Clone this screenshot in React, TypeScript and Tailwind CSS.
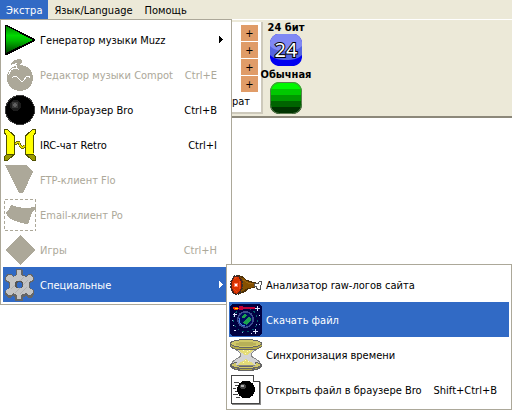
import { ReactNode } from "react";
import clsx from "clsx";

type Item = {
  label: string;
  icon: ReactNode;
  shortcut?: string;
  disabled?: boolean;
  active?: boolean;
  submenu?: boolean;
};

function Icon({ children }: { children: ReactNode }) {
  return (
    <svg
      viewBox="0 0 32 32"
      className="h-8 w-8 shrink-0"
      shapeRendering="crispEdges"
      aria-hidden="true"
    >
      {children}
    </svg>
  );
}

const PlayIcon = (
  <Icon>
    <defs>
      <linearGradient id="play" x1="0" y1="0" x2="0" y2="1">
        <stop offset="0" stopColor="#008000" />
        <stop offset="0.35" stopColor="#00d800" />
        <stop offset="0.55" stopColor="#00b800" />
        <stop offset="1" stopColor="#004000" />
      </linearGradient>
    </defs>
    <path d="M1 1h2l28 14v2L3 31H1z" fill="#000" />
    <path d="M2 2l27 14L2 29z" fill="url(#play)" />
  </Icon>
);

const CompotIcon = (
  <Icon>
    <circle cx="16" cy="19" r="13" fill="#aca899" />
    <path d="M7 6c0-3 4-6 9-6 3 0 3 4 1 5-2 1-2 3-1 5h-4c-1-3 0-4 1-6-2 0-4 1-6 2z" fill="#aca899" />
    <path d="M12.500 6c-1 3 0 4 2 4M4.500 16c1-4 4-7 7-7" fill="none" stroke="#fff" />
    <path d="M8 19l2-2h2l5 5h2l4-5h2l1 2" fill="none" stroke="#fff" />
  </Icon>
);

const BallIcon = (
  <Icon>
    <circle cx="16" cy="16" r="15" fill="#3c3c3c" />
    <circle cx="16" cy="16" r="14" fill="#000" />
    <circle cx="11.500" cy="11.500" r="5.500" fill="#1c1c1c" />
    <circle cx="11" cy="11" r="3.500" fill="#3a3a3a" />
    <circle cx="11" cy="11" r="1.800" fill="#606060" />
  </Icon>
);

const RetroIcon = (
  <Icon>
    <path d="M0 0h3l8 6v20l-8 6H0v-4l2-3V7L0 4z" fill="#505000" />
    <path d="M32 0h-3l-8 6v20l8 6h3v-4l-2-3V7l2-3z" fill="#505000" />
    <path d="M1 1h2l7 6v18H2l1-1V7L1 3zM31 1h-2l-7 6v18h8l-1-1V7l2-4z" fill="#ff0" />
    <path d="M2 26h7l-6 5H1v-3zM30 26h-7l6 5h2v-3z" fill="#989800" />
    <path d="M11 14.500h1l1-1h2l1 3 2 2h1l2-2" fill="none" stroke="#706c00" strokeWidth="2.400" />
    <path d="M11 14.500h1l1-1h2l1 3 2 2h1l2-2" fill="none" stroke="#e8e000" />
  </Icon>
);

const FloIcon = (
  <Icon>
    <path d="M1 1h21l7 7-10 21h-4z" fill="#aca899" />
  </Icon>
);

const PoIcon = (
  <Icon>
    <rect x="0.500" y="0.500" width="31" height="31" fill="none" stroke="#aca899" strokeDasharray="3 2" />
    <path d="M7 6l6 2 8 1 11-1v2h-1l-3 4-4 11h-2l-11-3-6-3-3-5 3-4z" fill="#aca899" />
  </Icon>
);

const DiamondIcon = (
  <Icon>
    <path d="M16 1l15 15-15 15L1 16z" fill="#aca899" />
  </Icon>
);

const GearIcon = (
  <Icon>
    <path
      d="M12 0h6l1 2v4l3 1 2-2h4l2 4v3l-4 2v5l4 2v4l-2 4h-4l-2-2-3 1v4l-2 2h-4l-2-2v-4l-3-1-2 2H4l-3-4v-3l4-3v-5l-4-2V9l2-4h4l2 2 3-1z"
      fill="#666"
    />
    <path
      d="M13 1h4v5l5 2 2-2h3l2 3v2l-4 2v6l4 2v2l-2 3h-3l-2-2-5 2v4h-4v-4l-4-2-2 2H4l-2-3v-2l4-2v-6l-4-2V9l2-3h3l2 2 4-2z"
      fill="#c4c4c4"
    />
    <path d="M7 20L20 8M11 24l13-13M16 25l7-7" stroke="#b0b0b0" fill="none" />
    <circle cx="15" cy="15.500" r="4" fill="#555" />
    <circle cx="15.500" cy="16" r="3" fill="#316ac5" />
  </Icon>
);

const MeatIcon = (
  <Icon>
    <path d="M7 6l5 1 5 4 7 2 3 1v4l-8 2-4 3-7 3z" fill="#4c3008" />
    <path d="M9 8l4 1 4 3 8 3v3l-7 1-5 3-4 2z" fill="#855000" />
    <path d="M13 11l5 3h5" stroke="#9c6410" fill="none" />
    <path d="M24 14h4l1-2h3v4h-1v5h-4l-1-3h-2z" fill="#555" />
    <path d="M25 15h4v-2h2v2l-1 2v3h-2l-1-3h-2z" fill="#fff" />
    <ellipse cx="6.500" cy="16" rx="6" ry="9.500" fill="#552014" stroke="#333" strokeDasharray="2 1" />
    <ellipse cx="6.500" cy="16" rx="4.500" ry="8.500" fill="#d83400" />
    <path d="M4 10l3-2M9 12v8M4 20l3 3" stroke="#e84818" />
    <ellipse cx="6" cy="16" rx="2" ry="2.500" fill="#ff8060" />
    <circle cx="6" cy="16" r="1.200" fill="#fff" />
  </Icon>
);

const SpaceIcon = (
  <Icon>
    <rect width="32" height="32" rx="4" fill="#000040" />
    <circle cx="15.500" cy="16" r="12" fill="none" stroke="#00606c" strokeDasharray="2 3" />
    <circle cx="15.500" cy="15.500" r="8.500" fill="#3c4c90" />
    <circle cx="15.500" cy="15.500" r="7" fill="#000c60" />
    <path d="M12 12l2-2 3 1-2 3h-3zM13 18l5-5 3 1v3l-3 2-1 2-3-1z" fill="#1ca050" />
    <path d="M9 14a7 7 0 006 8" stroke="#4080e0" fill="none" />
    <path d="M9 2h3l1 1h12v2H13l-1 1H9z" fill="#c00038" />
    <path d="M3 3h4l2 1-2 2H5L3 5z" fill="#f03000" />
    <path d="M5 4h3v1H5z" fill="#ffe000" />
    <path d="M27.500 2v5M25 4.500h5M25.500 25v5M23 27.500h5M4.500 9v4M2.500 10.500h4M4 26.500h2M3 21.500h1M29 11.500h1M21 29.500h1" stroke="#dce4ff" />
    <path d="M2 16.500h1M26 20.500h1M12 28.500h1M29 20.500h1" stroke="#90a0e0" />
  </Icon>
);

const HourglassIcon = (
  <Icon>
    <path d="M4 8c2 4 7 5 7 8S2 20 1 26h30c-1-6-10-7-10-10s5-4 7-8z" fill="#d4d4d4" stroke="#888" />
    <path d="M7 9c2 4 6 5 7 7h4c1-2 5-3 7-7z" fill="#e4dc78" />
    <path d="M8 26c2-4 6-3 8-7 2 4 6 3 8 7z" fill="#e4dc78" />
    <path d="M15 14h1v1h-1zM17 12h1v1h-1zM13 11h1v1h-1zM19 11h1v1h-1zM15 21h1v1h-1zM18 22h1v1h-1zM13 23h1v1h-1z" fill="#fffcc0" />
    <path d="M0 4v3c2 3 8 4 16 4s14-1 16-4V4z" fill="#b4ac48" stroke="#666" />
    <ellipse cx="16" cy="4.500" rx="15.500" ry="4" fill="#d0c868" stroke="#666" />
    <ellipse cx="16" cy="5" rx="11" ry="2" fill="#b8b058" />
    <path d="M0 26c1-2 4-3 7-3l-1 3c3 2 17 2 20 0l-1-3c3 0 6 1 7 3v2c-2 3-8 4-16 4S2 31 0 28z" fill="#666" />
    <path d="M1 26c1-1 3-2 5-2v2c3 3 17 3 20 0v-2c2 0 4 1 5 2-2 2-8 3-15 3S3 28 1 26z" fill="#d0c868" />
    <path d="M2 28c3 2 8 2 14 2s11 0 14-2c-3 2-8 3-14 3S5 30 2 28z" fill="#b4ac48" />
  </Icon>
);

const BroFileIcon = (
  <Icon>
    <path d="M1.500 1.500h22l6 6v22h-28z" fill="#fff" stroke="#444" />
    <path d="M30.500 8v22.500H2" fill="none" stroke="#888" />
    <path d="M23.500 1.500v6h6" fill="#fff" stroke="#444" />
    <path d="M4 8.500h5M5 11.500h3M3 14.500h3M5 17.500h2M3 20.500h5M6 23.500h4" stroke="#444" />
    <circle cx="16" cy="15.500" r="9" fill="#000" />
    <circle cx="13" cy="12.500" r="2.800" fill="#404040" />
    <circle cx="12.500" cy="12" r="1.300" fill="#b0b0b0" />
  </Icon>
);

const extraItems: Item[] = [
  { label: "Генератор музыки Muzz", icon: PlayIcon, submenu: true },
  { label: "Редактор музыки Compot", icon: CompotIcon, shortcut: "Ctrl+E", disabled: true },
  { label: "Мини-браузер Bro", icon: BallIcon, shortcut: "Ctrl+B" },
  { label: "IRC-чат Retro", icon: RetroIcon, shortcut: "Ctrl+I" },
  { label: "FTP-клиент Flo", icon: FloIcon, disabled: true },
  { label: "Email-клиент Po", icon: PoIcon, disabled: true },
  { label: "Игры", icon: DiamondIcon, shortcut: "Ctrl+H", disabled: true },
  { label: "Специальные", icon: GearIcon, submenu: true, active: true },
];

const specialItems: Item[] = [
  { label: "Анализатор raw-логов сайта", icon: MeatIcon },
  { label: "Скачать файл", icon: SpaceIcon, active: true },
  { label: "Синхронизация времени", icon: HourglassIcon },
  { label: "Открыть файл в браузере Bro", icon: BroFileIcon, shortcut: "Shift+Ctrl+B" },
];

function MenuItem({ item }: { item: Item }) {
  return (
    <button
      disabled={item.disabled}
      className={clsx(
        "flex h-[35px] w-full items-center gap-1 pl-px text-left whitespace-nowrap",
        item.disabled && "text-[#aca899]",
        item.active && "bg-[#316ac5] text-white",
        item.submenu ? "pr-1.5" : "pr-3"
      )}
    >
      {item.icon}
      <span className="flex-1 pt-0.5">{item.label}</span>
      {item.shortcut && <span className="pt-0.5">{item.shortcut}</span>}
      {item.submenu && (
        <svg viewBox="0 0 4 7" className="h-[7px] w-1" fill="currentColor" shapeRendering="crispEdges">
          <path d="M0 0l4 3.500L0 7z" />
        </svg>
      )}
    </button>
  );
}

function Menu({ items, className }: { items: Item[]; className: string }) {
  return (
    <div className={clsx("absolute border border-[#aca899] bg-white p-0.5", className)}>
      {items.map((item) => (
        <MenuItem key={item.label} item={item} />
      ))}
    </div>
  );
}

export default function App() {
  return (
    <div className="relative min-h-screen overflow-hidden bg-white font-['DejaVu_Sans_Condensed','Noto_Sans',sans-serif] text-[11px] leading-[13px] text-black">
      <nav className="flex h-[19px] bg-[#ece9d8]">
        <button className="bg-[#316ac5] px-1.5 pt-0.5 text-white">Экстра</button>
        <button className="px-1.5 pt-0.5">Язык/Language</button>
        <button className="px-1.5 pt-0.5">Помощь</button>
      </nav>

      <div className="flex border-t border-b-2 border-t-white border-b-[#8c887a] bg-[#ece9d8] pb-0.5">
        <div className="mt-0.5 flex w-[263px] flex-col items-end border-r-2 border-b-2 border-[#cdc9bb] bg-white pt-[3px] pr-[3px]">
          <div className="flex flex-col gap-px">
            <button className="h-4 w-[17px] bg-[#e09c68]">+</button>
            <button className="h-4 w-[17px] bg-[#e09c68]">+</button>
            <button className="h-4 w-[17px] bg-[#e09c68]">+</button>
            <button className="h-4 w-[17px] bg-[#e09c68]">+</button>
          </div>
          <span className="mt-0.5 mr-2 leading-4">рат</span>
        </div>

        <div className="flex w-[46px] flex-col items-center pt-px font-bold whitespace-nowrap">
          <span>24 бит</span>
          <button aria-label="24">
            <svg viewBox="0 0 32 32" className="h-8 w-8">
              <defs>
                <clipPath id="badge">
                  <path d="M8 0h16l8 8v16l-8 8H8l-8-8V8z" />
                  <rect width="32" height="32" rx="9" />
                </clipPath>
              </defs>
              <g clipPath="url(#badge)">
                <path d="M0 0h32v32H0z" fill="#0000f0" />
                <path d="M0 0h32v21c-4 4-9 5-16 5S4 25 0 21z" fill="#5464e0" />
                <path d="M0 0h32v12c-4 4-9 5-16 5S4 16 0 12z" fill="#8088f4" />
              </g>
              <text
                x="16"
                y="23"
                textAnchor="middle"
                fontFamily="Noto Sans, sans-serif"
                fontSize="20"
                fontWeight="400"
                fill="#fff"
                stroke="#000"
                strokeWidth="2"
                paintOrder="stroke"
              >
                24
              </text>
            </svg>
          </button>
          <span className="mt-0.5">Обычная</span>
          <button aria-label="Обычная" className="mt-px">
            <svg viewBox="0 0 32 32" className="h-8 w-8">
              <g clipPath="url(#badge)">
                <path d="M0 0h32v7H0z" fill="#00f800" />
                <path d="M0 7h32v6H0z" fill="#00c800" />
                <path d="M0 13h32v6H0z" fill="#009800" />
                <path d="M0 19h32v6H0z" fill="#006400" />
                <path d="M0 25h32v7H0z" fill="#003400" />
              </g>
              <rect x="0.500" y="0.500" width="31" height="31" rx="9" fill="none" stroke="#5c7c50" />
            </svg>
          </button>
        </div>
      </div>

      <Menu items={extraItems} className="top-[19px] left-0 w-[232px]" />
      <Menu items={specialItems} className="top-[264px] left-[226px] w-[286px]" />
    </div>
  );
}
